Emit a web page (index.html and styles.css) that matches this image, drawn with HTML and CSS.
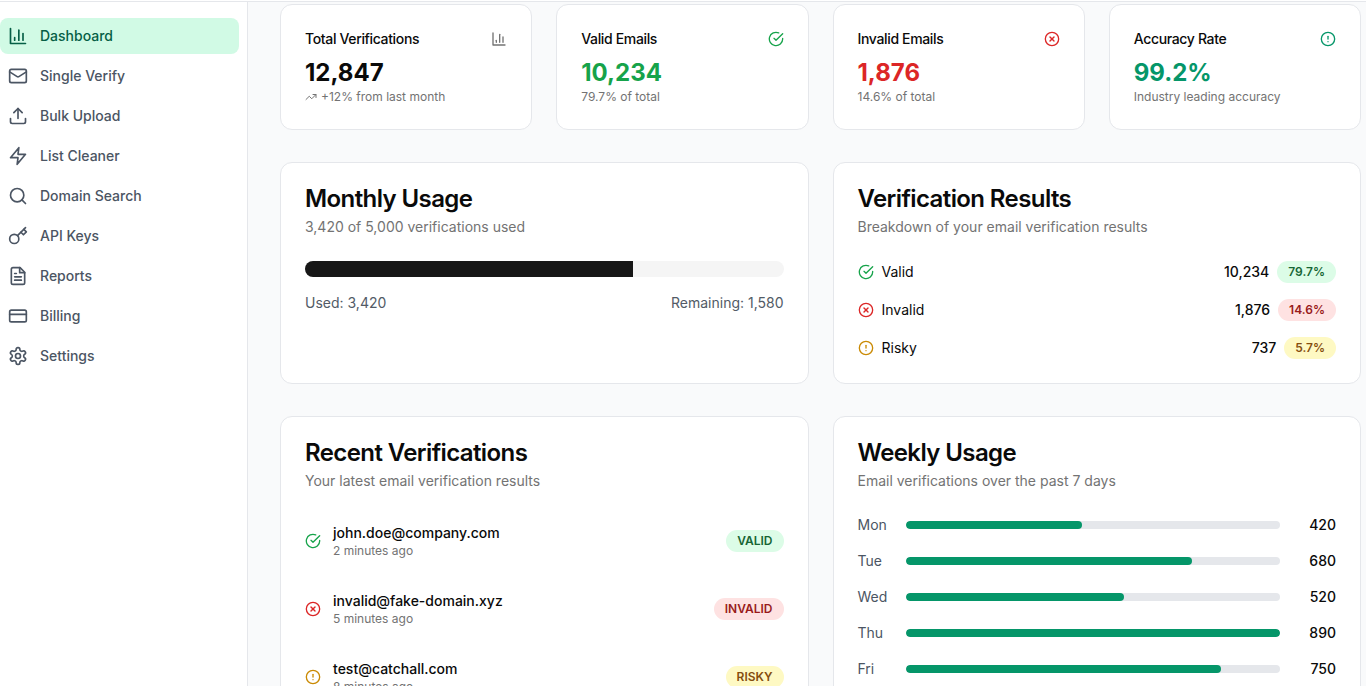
FILE: index.html
```html
<!DOCTYPE html>
<html lang="en">
<head>
<meta charset="utf-8">
<title>Dashboard</title>
<link rel="stylesheet" href="styles.css">
</head>
<body>
<svg class="sprite" xmlns="http://www.w3.org/2000/svg">
  <symbol id="i-chart" viewBox="0 0 24 24"><path d="M3 3v18h18"/><path d="M18 17V9"/><path d="M13 17V5"/><path d="M8 17v-3"/></symbol>
  <symbol id="i-mail" viewBox="0 0 24 24"><rect x="2" y="4" width="20" height="16" rx="2"/><path d="m22 7-8.97 5.7a1.94 1.94 0 0 1-2.06 0L2 7"/></symbol>
  <symbol id="i-upload" viewBox="0 0 24 24"><path d="M21 15v4a2 2 0 0 1-2 2H5a2 2 0 0 1-2-2v-4"/><polyline points="17 8 12 3 7 8"/><line x1="12" y1="3" x2="12" y2="15"/></symbol>
  <symbol id="i-zap" viewBox="0 0 24 24"><polygon points="13 2 3 14 12 14 11 22 21 10 12 10 13 2"/></symbol>
  <symbol id="i-search" viewBox="0 0 24 24"><circle cx="11" cy="11" r="8"/><path d="m21 21-4.3-4.3"/></symbol>
  <symbol id="i-key" viewBox="0 0 24 24"><circle cx="7.5" cy="15.5" r="5.5"/><path d="m21 2-9.6 9.6"/><path d="m15.5 7.5 3 3L22 7l-3-3"/></symbol>
  <symbol id="i-file" viewBox="0 0 24 24"><path d="M14.5 2H6a2 2 0 0 0-2 2v16a2 2 0 0 0 2 2h12a2 2 0 0 0 2-2V7.5L14.5 2z"/><polyline points="14 2 14 8 20 8"/><line x1="16" y1="13" x2="8" y2="13"/><line x1="16" y1="17" x2="8" y2="17"/><line x1="10" y1="9" x2="8" y2="9"/></symbol>
  <symbol id="i-card" viewBox="0 0 24 24"><rect x="2" y="5" width="20" height="14" rx="2"/><line x1="2" y1="10" x2="22" y2="10"/></symbol>
  <symbol id="i-gear" viewBox="0 0 24 24"><path d="M12.22 2h-.44a2 2 0 0 0-2 2v.18a2 2 0 0 1-1 1.73l-.43.25a2 2 0 0 1-2 0l-.15-.08a2 2 0 0 0-2.73.73l-.22.38a2 2 0 0 0 .73 2.73l.15.1a2 2 0 0 1 1 1.72v.51a2 2 0 0 1-1 1.74l-.15.09a2 2 0 0 0-.73 2.73l.22.38a2 2 0 0 0 2.73.73l.15-.08a2 2 0 0 1 2 0l.43.25a2 2 0 0 1 1 1.73V20a2 2 0 0 0 2 2h.44a2 2 0 0 0 2-2v-.18a2 2 0 0 1 1-1.73l.43-.25a2 2 0 0 1 2 0l.15.08a2 2 0 0 0 2.73-.73l.22-.39a2 2 0 0 0-.73-2.73l-.15-.08a2 2 0 0 1-1-1.74v-.5a2 2 0 0 1 1-1.74l.15-.09a2 2 0 0 0 .73-2.73l-.22-.38a2 2 0 0 0-2.73-.73l-.15.08a2 2 0 0 1-2 0l-.43-.25a2 2 0 0 1-1-1.73V4a2 2 0 0 0-2-2z"/><circle cx="12" cy="12" r="3"/></symbol>
  <symbol id="i-check" viewBox="0 0 24 24"><path d="M22 11.08V12a10 10 0 1 1-5.93-9.14"/><polyline points="22 4 12 14.01 9 11.01"/></symbol>
  <symbol id="i-x" viewBox="0 0 24 24"><circle cx="12" cy="12" r="10"/><path d="m15 9-6 6"/><path d="m9 9 6 6"/></symbol>
  <symbol id="i-alert" viewBox="0 0 24 24"><circle cx="12" cy="12" r="10"/><line x1="12" y1="8" x2="12" y2="12"/><line x1="12" y1="16" x2="12.01" y2="16"/></symbol>
  <symbol id="i-trend" viewBox="0 0 24 24"><polyline points="22 7 13.5 15.5 8.5 10.5 2 17"/><polyline points="16 7 22 7 22 13"/></symbol>
</svg>

<div class="topline"></div>
<div class="layout">
  <aside class="sidebar">
    <nav class="nav">
      <a class="nav-item active"><svg class="icon-20"><use href="#i-chart"/></svg>Dashboard</a>
      <a class="nav-item"><svg class="icon-20"><use href="#i-mail"/></svg>Single Verify</a>
      <a class="nav-item"><svg class="icon-20"><use href="#i-upload"/></svg>Bulk Upload</a>
      <a class="nav-item"><svg class="icon-20"><use href="#i-zap"/></svg>List Cleaner</a>
      <a class="nav-item"><svg class="icon-20"><use href="#i-search"/></svg>Domain Search</a>
      <a class="nav-item"><svg class="icon-20"><use href="#i-key"/></svg>API Keys</a>
      <a class="nav-item"><svg class="icon-20"><use href="#i-file"/></svg>Reports</a>
      <a class="nav-item"><svg class="icon-20"><use href="#i-card"/></svg>Billing</a>
      <a class="nav-item"><svg class="icon-20"><use href="#i-gear"/></svg>Settings</a>
    </nav>
  </aside>

  <main class="main">
    <section class="stats">
      <div class="card stat">
        <div class="stat-head"><span class="stat-title">Total Verifications</span><svg class="icon-16 muted"><use href="#i-chart"/></svg></div>
        <div class="stat-value">12,847</div>
        <div class="stat-note"><svg class="icon-12"><use href="#i-trend"/></svg>+12% from last month</div>
      </div>
      <div class="card stat">
        <div class="stat-head"><span class="stat-title">Valid Emails</span><svg class="icon-16 green"><use href="#i-check"/></svg></div>
        <div class="stat-value green">10,234</div>
        <div class="stat-note">79.7% of total</div>
      </div>
      <div class="card stat">
        <div class="stat-head"><span class="stat-title">Invalid Emails</span><svg class="icon-16 red"><use href="#i-x"/></svg></div>
        <div class="stat-value red">1,876</div>
        <div class="stat-note">14.6% of total</div>
      </div>
      <div class="card stat">
        <div class="stat-head"><span class="stat-title">Accuracy Rate</span><svg class="icon-16 emerald"><use href="#i-alert"/></svg></div>
        <div class="stat-value emerald">99.2%</div>
        <div class="stat-note">Industry leading accuracy</div>
      </div>
    </section>

    <section class="columns">
      <div class="card panel">
        <h2 class="panel-title">Monthly Usage</h2>
        <p class="panel-sub">3,420 of 5,000 verifications used</p>
        <div class="progress"><div class="progress-fill" style="width:68.5%"></div></div>
        <div class="progress-labels"><span>Used: 3,420</span><span>Remaining: 1,580</span></div>
      </div>
      <div class="card panel">
        <h2 class="panel-title">Verification Results</h2>
        <p class="panel-sub">Breakdown of your email verification results</p>
        <div class="results">
          <div class="result"><svg class="icon-16 green"><use href="#i-check"/></svg><span class="result-label">Valid</span><span class="result-count">10,234</span><span class="pill pill-green">79.7%</span></div>
          <div class="result"><svg class="icon-16 red"><use href="#i-x"/></svg><span class="result-label">Invalid</span><span class="result-count">1,876</span><span class="pill pill-red">14.6%</span></div>
          <div class="result"><svg class="icon-16 amber"><use href="#i-alert"/></svg><span class="result-label">Risky</span><span class="result-count">737</span><span class="pill pill-amber">5.7%</span></div>
        </div>
      </div>
    </section>

    <section class="columns">
      <div class="card panel">
        <h2 class="panel-title">Recent Verifications</h2>
        <p class="panel-sub">Your latest email verification results</p>
        <div class="recent">
          <div class="recent-row"><svg class="icon-16 green"><use href="#i-check"/></svg><div class="recent-text"><div class="recent-email">john.doe@company.com</div><div class="recent-time">2 minutes ago</div></div><span class="pill pill-green">VALID</span></div>
          <div class="recent-row"><svg class="icon-16 red"><use href="#i-x"/></svg><div class="recent-text"><div class="recent-email">invalid@fake-domain.xyz</div><div class="recent-time">5 minutes ago</div></div><span class="pill pill-red">INVALID</span></div>
          <div class="recent-row"><svg class="icon-16 amber"><use href="#i-alert"/></svg><div class="recent-text"><div class="recent-email">test@catchall.com</div><div class="recent-time">8 minutes ago</div></div><span class="pill pill-amber">RISKY</span></div>
        </div>
      </div>
      <div class="card panel">
        <h2 class="panel-title">Weekly Usage</h2>
        <p class="panel-sub">Email verifications over the past 7 days</p>
        <div class="weekly">
          <div class="day"><span class="day-name">Mon</span><div class="day-track"><div class="day-fill" style="width:47.19%"></div></div><span class="day-value">420</span></div>
          <div class="day"><span class="day-name">Tue</span><div class="day-track"><div class="day-fill" style="width:76.4%"></div></div><span class="day-value">680</span></div>
          <div class="day"><span class="day-name">Wed</span><div class="day-track"><div class="day-fill" style="width:58.43%"></div></div><span class="day-value">520</span></div>
          <div class="day"><span class="day-name">Thu</span><div class="day-track"><div class="day-fill" style="width:100%"></div></div><span class="day-value">890</span></div>
          <div class="day"><span class="day-name">Fri</span><div class="day-track"><div class="day-fill" style="width:84.27%"></div></div><span class="day-value">750</span></div>
        </div>
      </div>
    </section>
  </main>
</div>
</body>
</html>
```
FILE: styles.css
```css
* { box-sizing: border-box; }

html, body {
  margin: 0;
  height: 100%;
  overflow: hidden;
}

body {
  background: #f9fafb;
  color: #0a0a0a;
  font-family: Inter, "Liberation Sans", sans-serif;
  font-size: 14px;
  line-height: 20px;
}

.sprite { display: none; }

svg {
  fill: none;
  stroke: currentColor;
  stroke-width: 2;
  stroke-linecap: round;
  stroke-linejoin: round;
  flex: none;
}

.icon-20 { width: 20px; height: 20px; }
.icon-16 { width: 16px; height: 16px; }
.icon-12 { width: 12px; height: 12px; }

.muted { color: #737373; }
.green { color: #16a34a; }
.red { color: #dc2626; }
.emerald { color: #059669; }
.amber { color: #ca8a04; }

.topline {
  height: 2px;
  background: #fff;
  border-bottom: 1px solid #e5e7eb;
}

.layout {
  display: flex;
  height: 684px;
}

.sidebar {
  width: 248px;
  flex: none;
  background: #fff;
  border-right: 1px solid #e5e7eb;
  padding: 16px 8px 0 0;
}

.nav {
  display: flex;
  flex-direction: column;
  gap: 4px;
}

.nav-item {
  display: flex;
  align-items: center;
  gap: 12px;
  height: 36px;
  padding-left: 8px;
  border-radius: 8px;
  color: #4b5563;
  font-weight: 500;
}

.nav-item.active {
  background: #d1fae5;
  color: #065f46;
}

.main {
  flex: 1;
  min-width: 0;
  padding: 2px 5px 0 32px;
  display: flex;
  flex-direction: column;
  gap: 32px;
}

.card {
  background: #fff;
  border: 1px solid #e5e7eb;
  border-radius: 12px;
  padding: 24px;
}

.stats {
  display: grid;
  grid-template-columns: repeat(4, 1fr);
  gap: 24px;
}

.stat-head {
  display: flex;
  align-items: center;
  justify-content: space-between;
  margin-bottom: 8px;
}

.stat-title {
  font-weight: 500;
  letter-spacing: -0.35px;
}

.stat-value {
  font-size: 24px;
  line-height: 32px;
  font-weight: 700;
}

.stat-note {
  display: flex;
  align-items: center;
  gap: 4px;
  font-size: 12px;
  line-height: 16px;
  color: #737373;
}

.columns {
  display: grid;
  grid-template-columns: repeat(2, 1fr);
  gap: 24px;
}

.panel-title {
  margin: 0;
  font-size: 24px;
  line-height: 24px;
  font-weight: 600;
  letter-spacing: -0.6px;
}

.panel-sub {
  margin: 6px 0 24px;
  color: #737373;
}

.progress {
  height: 16px;
  border-radius: 999px;
  background: #f5f5f5;
  overflow: hidden;
}

.progress-fill {
  height: 100%;
  background: #171717;
}

.progress-labels {
  display: flex;
  justify-content: space-between;
  margin-top: 16px;
  color: #525b66;
}

.results {
  display: flex;
  flex-direction: column;
  gap: 16px;
}

.result {
  display: flex;
  align-items: center;
  gap: 8px;
}

.result-label { flex: 1; }

.result-count { font-weight: 500; }

.pill {
  display: inline-flex;
  align-items: center;
  height: 22px;
  padding: 0 11px;
  border-radius: 999px;
  font-size: 12px;
  line-height: 16px;
  font-weight: 600;
}

.pill-green { background: #dcfce7; color: #166534; }
.pill-red { background: #fee2e2; color: #991b1b; }
.pill-amber { background: #fef9c3; color: #854d0e; }

.recent {
  display: flex;
  flex-direction: column;
  gap: 16px;
}

.recent-row {
  display: flex;
  align-items: center;
  gap: 12px;
  padding: 8px 0;
}

.recent-text { flex: 1; }

.recent-email { font-weight: 500; }

.recent-time {
  font-size: 12px;
  line-height: 16px;
  color: #737373;
}

.weekly {
  display: flex;
  flex-direction: column;
  gap: 16px;
}

.day {
  display: flex;
  align-items: center;
}

.day-name {
  width: 48px;
  flex: none;
  color: #4b5563;
}

.day-track {
  flex: 1;
  height: 8px;
  border-radius: 999px;
  background: #e5e7eb;
  overflow: hidden;
}

.day-fill {
  height: 100%;
  border-radius: 999px;
  background: #059669;
}

.day-value {
  width: 56px;
  flex: none;
  text-align: right;
  font-weight: 500;
}
```
